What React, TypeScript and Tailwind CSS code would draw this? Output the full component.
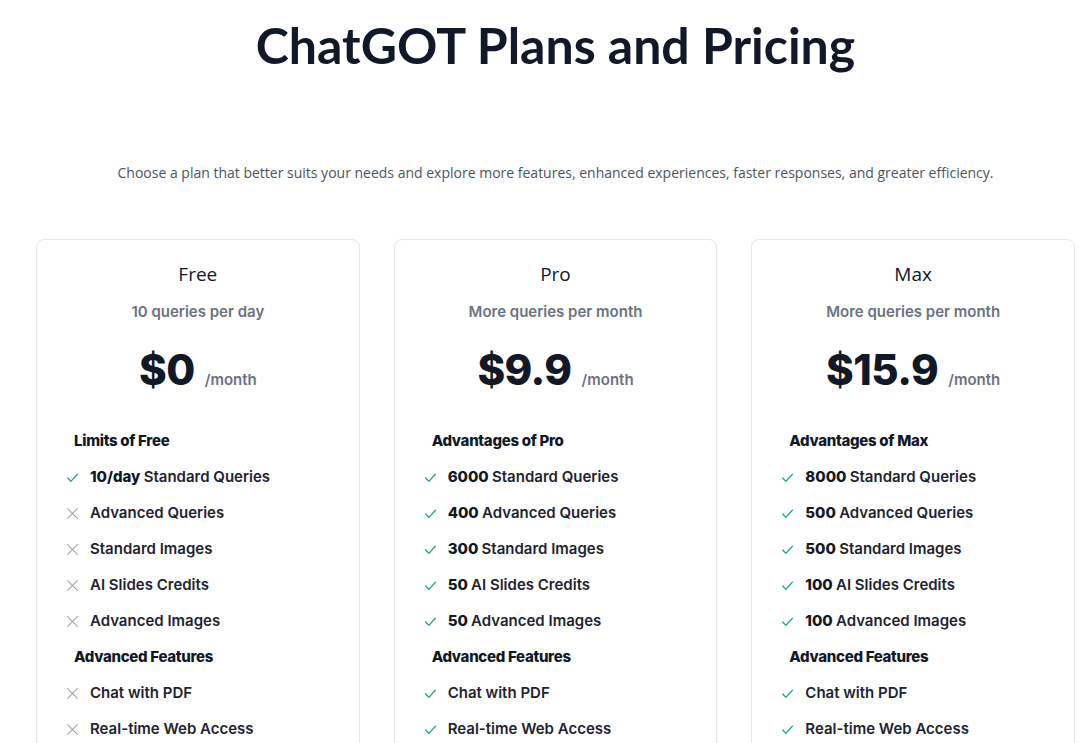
import React from "react";

type Item = { ok: boolean; bold?: string; text: string };
type Plan = {
  name: string;
  sub: string;
  price: string;
  head: string;
  items: Item[];
  adv: Item[];
};

const plans: Plan[] = [
  {
    name: "Free",
    sub: "10 queries per day",
    price: "$0",
    head: "Limits of Free",
    items: [
      { ok: true, bold: "10/day", text: "Standard Queries" },
      { ok: false, text: "Advanced Queries" },
      { ok: false, text: "Standard Images" },
      { ok: false, text: "AI Slides Credits" },
      { ok: false, text: "Advanced Images" },
    ],
    adv: [
      { ok: false, text: "Chat with PDF" },
      { ok: false, text: "Real-time Web Access" },
    ],
  },
  {
    name: "Pro",
    sub: "More queries per month",
    price: "$9.9",
    head: "Advantages of Pro",
    items: [
      { ok: true, bold: "6000", text: "Standard Queries" },
      { ok: true, bold: "400", text: "Advanced Queries" },
      { ok: true, bold: "300", text: "Standard Images" },
      { ok: true, bold: "50", text: "AI Slides Credits" },
      { ok: true, bold: "50", text: "Advanced Images" },
    ],
    adv: [
      { ok: true, text: "Chat with PDF" },
      { ok: true, text: "Real-time Web Access" },
    ],
  },
  {
    name: "Max",
    sub: "More queries per month",
    price: "$15.9",
    head: "Advantages of Max",
    items: [
      { ok: true, bold: "8000", text: "Standard Queries" },
      { ok: true, bold: "500", text: "Advanced Queries" },
      { ok: true, bold: "500", text: "Standard Images" },
      { ok: true, bold: "100", text: "AI Slides Credits" },
      { ok: true, bold: "100", text: "Advanced Images" },
    ],
    adv: [
      { ok: true, text: "Chat with PDF" },
      { ok: true, text: "Real-time Web Access" },
    ],
  },
];

function Check() {
  return (
    <svg width="13" height="13" viewBox="0 0 24 24" fill="none" stroke="#16a37a" strokeWidth="2.2" strokeLinecap="round" strokeLinejoin="round">
      <path d="M3 13l6 6L21 6" />
    </svg>
  );
}

function Cross() {
  return (
    <svg width="13" height="13" viewBox="0 0 24 24" fill="none" stroke="#9ca3af" strokeWidth="2" strokeLinecap="round">
      <path d="M3 3l18 18M21 3L3 21" />
    </svg>
  );
}

function Row({ it }: { it: Item }) {
  return (
    <div className="flex items-center h-[36px]">
      <div className="w-[25px] pl-[1px] flex items-center">{it.ok ? <Check /> : <Cross />}</div>
      <div className="text-[15px] font-semibold text-[#1f2330]">
        {it.bold && <span className="font-extrabold text-[#111827]">{it.bold} </span>}
        {it.text}
      </div>
    </div>
  );
}

function Card({ p }: { p: Plan }) {
  return (
    <div className="border border-[#e5e7eb] rounded-lg h-[560px] pt-[21px] px-[28px]" style={{ fontFamily: "Inter, sans-serif" }}>
      <div className="text-center text-[19px] text-[#111827] leading-[26px]" style={{ fontFamily: "'Open Sans', sans-serif" }}>
        {p.name}
      </div>
      <div className="text-center text-[15px] font-semibold text-[#6b7280] mt-[14px] leading-[22px]">{p.sub}</div>
      <div className="flex items-baseline justify-center mt-[22px] h-[50px]">
        <span className="text-[42px] font-extrabold text-[#111827] leading-[50px] tracking-[-0.5px]">{p.price}</span>
        <span className="text-[15px] font-semibold text-[#6b7280] ml-[10px]">/month</span>
      </div>
      <div className="mt-[28px]">
        <div className="h-[36px] flex items-center pl-[9px] text-[15px] font-extrabold text-[#111827] tracking-[-0.3px]">{p.head}</div>
        {p.items.map((it, i) => (
          <Row key={i} it={it} />
        ))}
        <div className="h-[36px] flex items-center pl-[9px] text-[15px] font-extrabold text-[#111827] tracking-[-0.3px]">Advanced Features</div>
        {p.adv.map((it, i) => (
          <Row key={i} it={it} />
        ))}
      </div>
    </div>
  );
}

export default function App() {
  return (
    <div className="w-[1087px] h-[743px] overflow-hidden bg-white">
      <div className="ml-[36px] w-[1039px]">
        <h1
          className="text-center text-[50px] font-bold text-[#111827] leading-[62px] pt-[14px]"
          style={{ fontFamily: "Lato, sans-serif" }}
        >
          ChatGOT Plans and Pricing
        </h1>
        <p
          className="text-center text-[14px] text-[#4b5563] mt-[86px] leading-[22px]"
          style={{ fontFamily: "'Open Sans', sans-serif" }}
        >
          Choose a plan that better suits your needs and explore more features, enhanced experiences, faster responses, and greater efficiency.
        </p>
        <div className="grid grid-cols-3 gap-[34px] mt-[55px]">
          {plans.map((p) => (
            <Card key={p.name} p={p} />
          ))}
        </div>
      </div>
    </div>
  );
}
